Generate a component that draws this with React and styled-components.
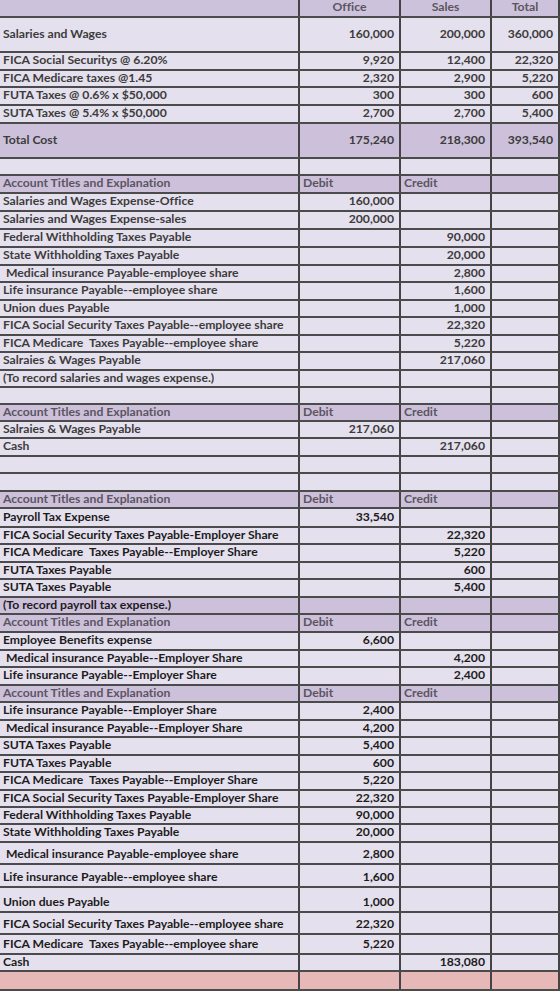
import React from 'react'
import styled, { createGlobalStyle } from 'styled-components'

const GlobalStyle = createGlobalStyle`
  html, body {
    margin: 0;
    padding: 0;
    background: #ffffff;
  }
  body {
    font-family: Lato, "Noto Sans", "Liberation Sans", sans-serif;
  }
`

// row kinds: plain, top, purple, head, pink
const H = ['', 'Office', 'Sales', 'Total']
const J = ['Account Titles and Explanation', 'Debit', 'Credit', '']

const rows = [
  { h: 18, kind: 'top', cells: H },
  { h: 35, mid: true, cells: ['Salaries and Wages', '160,000', '200,000', '360,000'] },
  { h: 18, cells: ['FICA Social Securitys @ 6.20%', '9,920', '12,400', '22,320'] },
  { h: 17, cells: ['FICA Medicare taxes @1.45', '2,320', '2,900', '5,220'] },
  { h: 18, cells: ['FUTA Taxes @ 0.6% x $50,000', '300', '300', '600'] },
  { h: 18, cells: ['SUTA Taxes @ 5.4% x $50,000', '2,700', '2,700', '5,400'] },
  { h: 35, mid: true, kind: 'purple', cells: ['Total Cost', '175,240', '218,300', '393,540'] },
  { h: 17, cells: [] },
  { h: 18, kind: 'head', cells: J },
  { h: 18, cells: ['Salaries and Wages Expense-Office', '160,000'] },
  { h: 18, cells: ['Salaries and Wages Expense-sales', '200,000'] },
  { h: 18, cells: ['Federal Withholding Taxes Payable', '', '90,000'] },
  { h: 18, cells: ['State Withholding Taxes Payable', '', '20,000'] },
  { h: 17, cells: ['\u00a0Medical insurance Payable-employee share', '', '2,800'] },
  { h: 18, cells: ['Life insurance Payable--employee share', '', '1,600'] },
  { h: 17, cells: ['Union dues Payable', '', '1,000'] },
  { h: 18, cells: ['FICA Social Security Taxes Payable--employee share', '', '22,320'] },
  { h: 17, cells: ['FICA Medicare\u00a0 Taxes Payable--employee share', '', '5,220'] },
  { h: 18, cells: ['Salraies & Wages Payable', '', '217,060'] },
  { h: 17, cells: ['(To record salaries and wages expense.)'] },
  { h: 17, cells: [] },
  { h: 17, kind: 'head', cells: J },
  { h: 17, cells: ['Salraies & Wages Payable', '217,060'] },
  { h: 18, cells: ['Cash', '', '217,060'] },
  { h: 17, cells: [] },
  { h: 18, cells: [] },
  { h: 17, kind: 'head', cells: J },
  { h: 19, dark: true, cells: ['Payroll Tax Expense', '33,540'] },
  { h: 17, dark: true, cells: ['FICA Social Security Taxes Payable-Employer Share', '', '22,320'] },
  { h: 18, dark: true, cells: ['FICA Medicare\u00a0 Taxes Payable--Employer Share', '', '5,220'] },
  { h: 17, dark: true, cells: ['FUTA Taxes Payable', '', '600'] },
  { h: 18, dark: true, cells: ['SUTA Taxes Payable', '', '5,400'] },
  { h: 17, kind: 'purple', dark: true, cells: ['(To record payroll tax expense.)'] },
  { h: 18, kind: 'head', cells: J },
  { h: 18, dark: true, cells: ['Employee Benefits expense', '6,600'] },
  { h: 17, dark: true, cells: ['\u00a0Medical insurance Payable--Employer Share', '', '4,200'] },
  { h: 18, dark: true, cells: ['Life insurance Payable--Employer Share', '', '2,400'] },
  { h: 17, kind: 'head', cells: J },
  { h: 18, dark: true, cells: ['Life insurance Payable--Employer Share', '2,400'] },
  { h: 17, dark: true, cells: ['\u00a0Medical insurance Payable--Employer Share', '4,200'] },
  { h: 18, dark: true, cells: ['SUTA Taxes Payable', '5,400'] },
  { h: 17, dark: true, cells: ['FUTA Taxes Payable', '600'] },
  { h: 18, dark: true, cells: ['FICA Medicare\u00a0 Taxes Payable--Employer Share', '5,220'] },
  { h: 17, dark: true, cells: ['FICA Social Security Taxes Payable-Employer Share', '22,320'] },
  { h: 17, dark: true, cells: ['Federal Withholding Taxes Payable', '90,000'] },
  { h: 18, dark: true, cells: ['State Withholding Taxes Payable', '20,000'] },
  { h: 22, dark: true, cells: ['\u00a0Medical insurance Payable-employee share', '2,800'] },
  { h: 23, dark: true, cells: ['Life insurance Payable--employee share', '1,600'] },
  { h: 25, dark: true, cells: ['Union dues Payable', '1,000'] },
  { h: 22, dark: true, cells: ['FICA Social Security Taxes Payable--employee share', '22,320'] },
  { h: 20, dark: true, cells: ['FICA Medicare\u00a0 Taxes Payable--employee share', '5,220'] },
  { h: 17, dark: true, cells: ['Cash', '', '183,080'] },
  { h: 19, kind: 'pink', cells: [] },
]

const fills = {
  plain: '#e5e0ed',
  top: '#cdc2db',
  purple: '#ccc0da',
  head: '#ccc0da',
  pink: '#e6b8b7',
}

const tones = {
  soft: '#5b5560',
  normal: '#3c3c3c',
  dark: '#1c1c1c',
}

const alignFor = (kind, c) => {
  if (c === 0) return 'left'
  if (kind === 'top') return 'center'
  if (kind === 'head') return 'left'
  return 'right'
}

const App = () => {
  return (
    <>
      <GlobalStyle />
      <Sheet>
        {rows.map((row, i) => {
          const kind = row.kind || 'plain'
          return (
            <Row key={i} $h={row.h} $fill={fills[kind]} $mid={row.mid}>
              {[0, 1, 2, 3].map((c) => (
                <Cell
                  key={c}
                  $align={alignFor(kind, c)}
                  $tone={kind === 'top' || kind === 'head' ? 'soft' : row.dark ? 'dark' : 'normal'}
                >
                  {row.cells[c] || ''}
                </Cell>
              ))}
            </Row>
          )
        })}
      </Sheet>
    </>
  )
}

const Sheet = styled.div`
  width: 560px;
  display: flex;
  flex-direction: column;
`

const Row = styled.div`
  display: grid;
  grid-template-columns: 300px 101px 91px 68px;
  flex: 0 0 auto;
  height: ${(p) => p.$h}px;
  background: ${(p) => p.$fill};
  border-bottom: 2px solid #4b4b4b;
  box-sizing: border-box;
  > div {
    align-items: ${(p) => (p.$mid ? 'center' : 'flex-end')};
  }
`

const Cell = styled.div`
  display: flex;
  justify-content: ${(p) => (p.$align === 'right' ? 'flex-end' : p.$align === 'center' ? 'center' : 'flex-start')};
  padding: 0 ${(p) => (p.$align === 'right' ? 5 : 3)}px 2px 3px;
  border-right: 2px solid #444;
  box-sizing: border-box;
  white-space: pre;
  font-size: 12.2px;
  font-weight: 700;
  line-height: 14px;
  font-variant-ligatures: none;
  color: ${(p) => tones[p.$tone]};
`

export default App
